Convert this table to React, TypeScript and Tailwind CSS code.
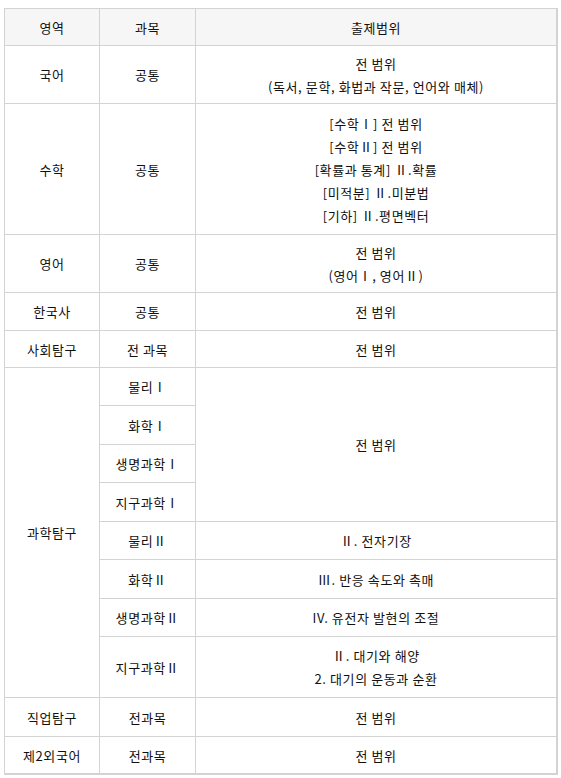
import React from "react";

const cell =
  "border-r border-b border-[#d3d3d3] flex items-center justify-center text-center";

export default function App() {
  return (
    <div
      className="bg-white min-h-[778px] pt-2 pl-1 text-[13px] text-[#111] tracking-[0.6px]"
      style={{ fontFamily: '"Noto Sans CJK KR", "Noto Sans", sans-serif' }}
    >
      <div className="grid w-[554px] grid-cols-[95px_96px_362px] grid-rows-[37px_58px_131px_58px_38px_37px_38px_39px_38px_39px_38px_39px_38px_61px_39px_38px] border-l border-t border-[#d3d3d3] leading-[23px]">
        {/* header */}
        <div className={`${cell} bg-[#f6f6f6]`}>영역</div>
        <div className={`${cell} bg-[#f6f6f6]`}>과목</div>
        <div className={`${cell} bg-[#f6f6f6] border-r-2`}>출제범위</div>

        {/* 국어 */}
        <div className={cell}>국어</div>
        <div className={cell}>공통</div>
        <div className={`${cell} border-r-2`}>
          전 범위
          <br />
          (독서, 문학, 화법과 작문, 언어와 매체)
        </div>

        {/* 수학 */}
        <div className={cell}>수학</div>
        <div className={cell}>공통</div>
        <div className={`${cell} border-r-2`}>
          [수학Ⅰ] 전 범위
          <br />
          [수학Ⅱ] 전 범위
          <br />
          [확률과 통계] Ⅱ.확률
          <br />
          [미적분] Ⅱ.미분법
          <br />
          [기하] Ⅱ.평면벡터
        </div>

        {/* 영어 */}
        <div className={cell}>영어</div>
        <div className={cell}>공통</div>
        <div className={`${cell} border-r-2`}>
          전 범위
          <br />
          (영어Ⅰ, 영어Ⅱ)
        </div>

        {/* 한국사 */}
        <div className={cell}>한국사</div>
        <div className={cell}>공통</div>
        <div className={`${cell} border-r-2`}>전 범위</div>

        {/* 사회탐구 */}
        <div className={cell}>사회탐구</div>
        <div className={cell}>전 과목</div>
        <div className={`${cell} border-r-2`}>전 범위</div>

        {/* 과학탐구 */}
        <div className={`${cell} row-span-8`}>과학탐구</div>
        <div className={cell}>물리Ⅰ</div>
        <div className={`${cell} row-span-4 border-r-2`}>전 범위</div>
        <div className={cell}>화학Ⅰ</div>
        <div className={cell}>생명과학Ⅰ</div>
        <div className={cell}>지구과학Ⅰ</div>
        <div className={cell}>물리Ⅱ</div>
        <div className={`${cell} border-r-2`}>Ⅱ. 전자기장</div>
        <div className={cell}>화학Ⅱ</div>
        <div className={`${cell} border-r-2`}>Ⅲ. 반응 속도와 촉매</div>
        <div className={cell}>생명과학Ⅱ</div>
        <div className={`${cell} border-r-2`}>IV. 유전자 발현의 조절</div>
        <div className={cell}>지구과학Ⅱ</div>
        <div className={`${cell} border-r-2`}>
          Ⅱ. 대기와 해양
          <br />
          2. 대기의 운동과 순환
        </div>

        {/* 직업탐구 */}
        <div className={cell}>직업탐구</div>
        <div className={cell}>전과목</div>
        <div className={`${cell} border-r-2`}>전 범위</div>

        {/* 제2외국어 */}
        <div className={`${cell} border-b-2`}>제2외국어</div>
        <div className={`${cell} border-b-2`}>전과목</div>
        <div className={`${cell} border-r-2 border-b-2`}>전 범위</div>
      </div>
    </div>
  );
}
